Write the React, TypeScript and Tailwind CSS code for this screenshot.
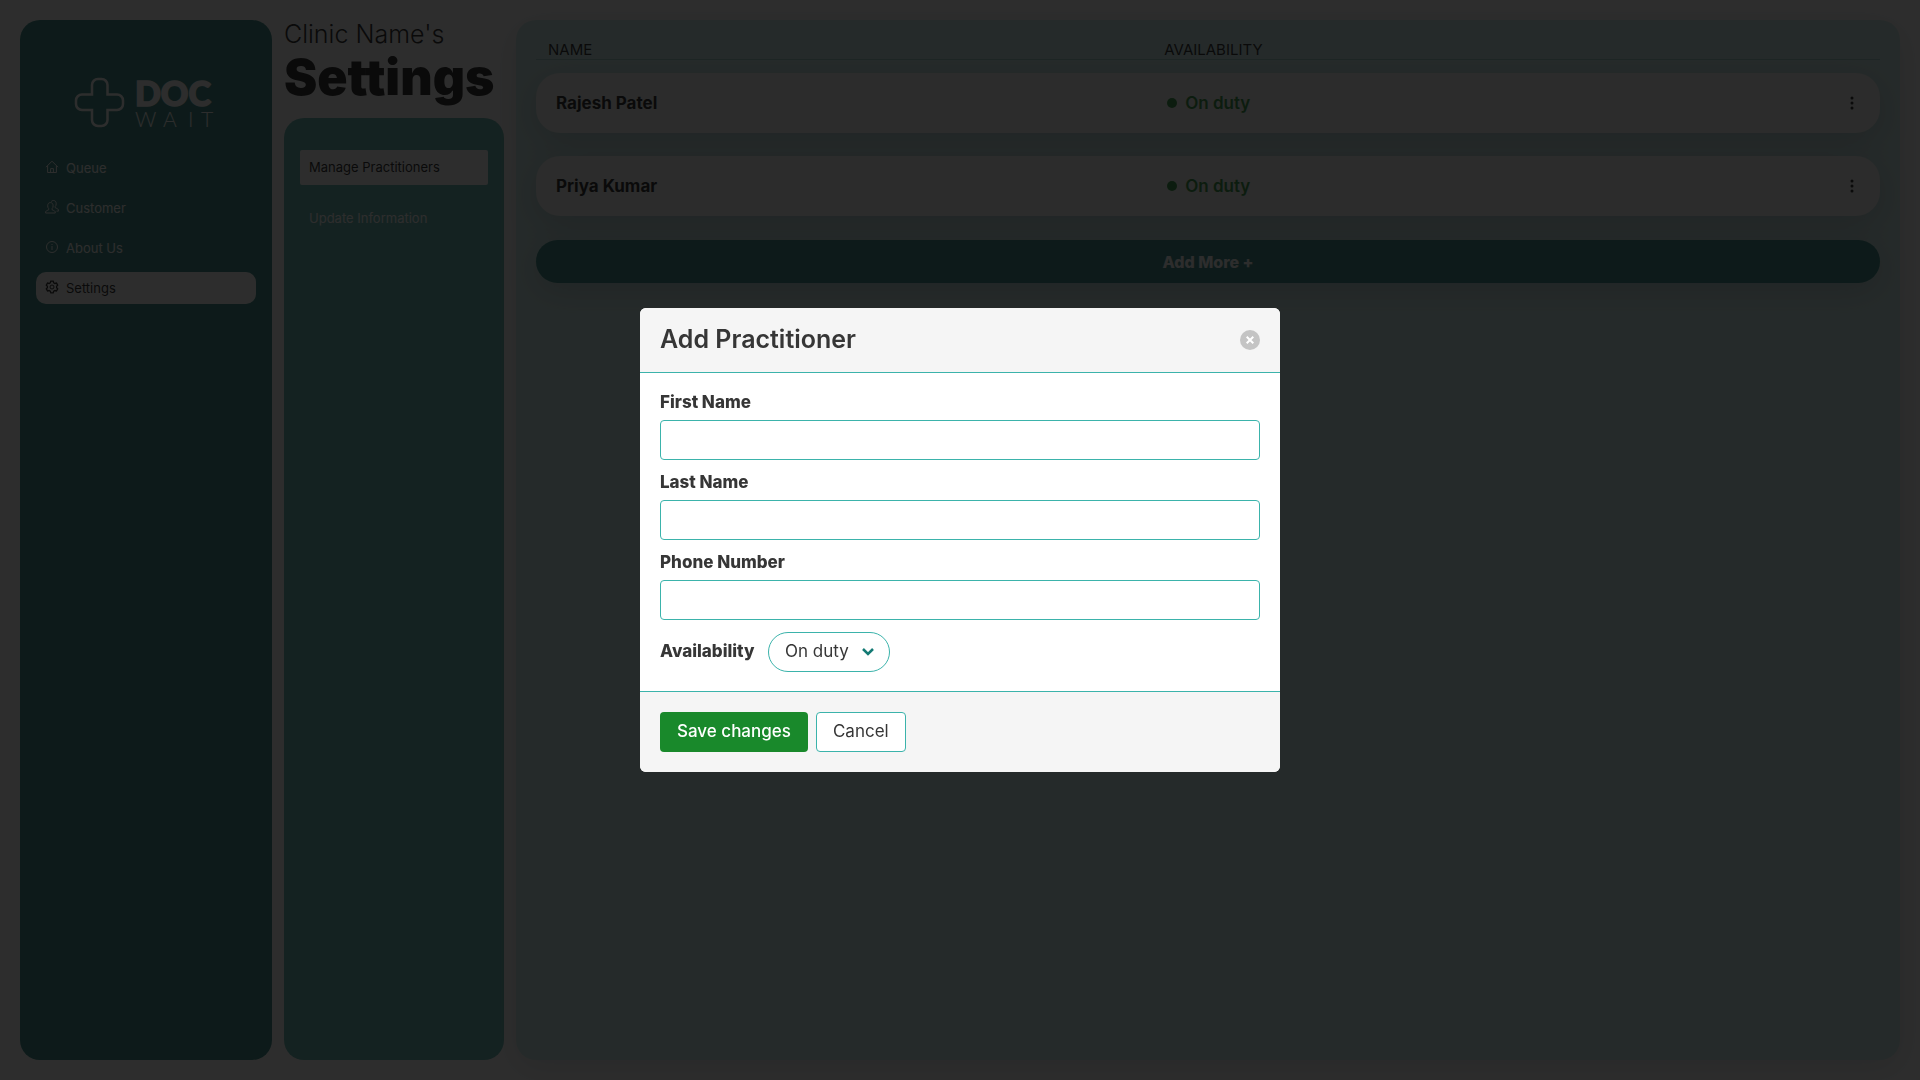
import { useState } from "react";
import type { ReactNode } from "react";

function Icon({ children }: { children: ReactNode }) {
  return (
    <svg viewBox="0 0 14 14" className="mb-1 size-3.5 shrink-0" fill="none" stroke="currentColor" strokeWidth="1" aria-hidden="true">
      {children}
    </svg>
  );
}

const navItems: { label: string; icon: ReactNode }[] = [
  {
    label: "Queue",
    icon: (
      <Icon>
        <path d="M1 7.200 7 1.200l6 6M2.600 6v6.500h8.800V6M5.600 12.500V8.600h2.800v3.900" />
      </Icon>
    ),
  },
  {
    label: "Customer",
    icon: (
      <Icon>
        <path d="M.6 13v-.9c0-.8.6-1.300 3.100-2.300V8.600C3 8 2.700 7.100 2.700 5.800c0-2 1-3.200 2.700-3.200s2.700 1.200 2.700 3.200c0 1.300-.3 2.200-1 2.800v1.200c2.500 1 3.200 1.500 3.200 2.300v.9zM6.200 1.500C6.800.8 7.600.5 8.500.5c1.700 0 2.700 1.200 2.700 3.200 0 1.300-.3 2.200-1 2.800v1.200c2.600 1.100 3.300 1.600 3.300 2.500v.9h-2" />
      </Icon>
    ),
  },
  {
    label: "About Us",
    icon: (
      <Icon>
        <circle cx="7" cy="7" r="5.500" />
        <path d="M7 4v1M7 6v4" />
      </Icon>
    ),
  },
  {
    label: "Settings",
    icon: (
      <Icon>
        <path
          strokeWidth="1.300"
          d="M5.800 1.200h2.400l.5 1.600 1.200.7 1.600-.4 1.200 2.100L11.600 6.300v1.400l1.100 1.100-1.200 2.100-1.600-.4-1.200.7-.5 1.600H5.800l-.5-1.600-1.200-.7-1.600.4L1.300 8.800l1.100-1.100V6.300L1.300 5.200l1.200-2.100 1.600.4 1.200-.7z"
        />
        <circle cx="7" cy="7" r="2" />
      </Icon>
    ),
  },
];

const practitioners = ["Rajesh Patel", "Priya Kumar"];

function Logo() {
  return (
    <svg viewBox="0 0 142 50" className="mx-auto h-[50px] w-[142px] overflow-visible text-white" fill="currentColor" role="img" aria-label="Doc Wait">
      <path
        d="M23 1h3.500a6 6 0 0 1 6 6v9.500H42a6 6 0 0 1 6 6v3.500a6 6 0 0 1-6 6h-9.500v10a6 6 0 0 1-6 6H23a6 6 0 0 1-6-6v-10H7a6 6 0 0 1-6-6v-3.500a6 6 0 0 1 6-6h10V7a6 6 0 0 1 6-6z"
        fill="none"
        stroke="currentColor"
        strokeWidth="2.500"
      />
      <text x="60" y="28" fontSize="34" fontWeight="900" fontFamily="Lato, sans-serif" stroke="currentColor" strokeWidth="1.500">DOC</text>
      <text x="60 88 113 126" y="49" fontSize="21" fontWeight="300" fontFamily="Lato, sans-serif">WAIT</text>
    </svg>
  );
}

function Sidebar() {
  return (
    <aside className="w-[252px] shrink-0 rounded-[20px] bg-[#1c7c76] px-4 pt-[58px]">
      <Logo />
      <nav className="mt-6 flex flex-col gap-2">
        {navItems.map((item) => (
          <a
            key={item.label}
            href="#"
            className={
              item.label === "Settings"
                ? "flex h-8 items-center gap-[7px] rounded-[10px] bg-white pt-0.5 pl-[9px] text-[13px] text-[#0a0a0a]"
                : "flex h-8 items-center gap-[7px] rounded-[10px] pt-0.5 pl-[9px] text-[13px] text-white"
            }
          >
            {item.icon}
            <span>{item.label}</span>
          </a>
        ))}
      </nav>
    </aside>
  );
}

function SettingsColumn() {
  return (
    <div className="flex w-[220px] shrink-0 flex-col text-[#0a0a0a]">
      <h1 className="whitespace-nowrap">
        <span className="block text-[25px] leading-7 font-light">Clinic Name's</span>
        <span className="block text-[50px] leading-[58px] font-black">Settings</span>
      </h1>
      <nav className="mt-3 flex flex-1 flex-col gap-4 rounded-[20px] bg-[#51b1aa] px-4 py-8 text-[13px]">
        <a href="#" className="flex h-[35px] items-center rounded-xs bg-white px-[9px]">Manage Practitioners</a>
        <a href="#" className="flex h-[35px] items-center rounded-xs px-[9px] text-white">Update Information</a>
      </nav>
    </div>
  );
}

function PractitionerList({ onAdd }: { onAdd: () => void }) {
  return (
    <main className="min-w-0 flex-1 rounded-[20px] bg-[#c8eae8] px-5 pt-2 text-[#0a0a0a] shadow-[0_8px_32px_rgba(31,38,60,0.15)]">
      <table className="block w-full">
        <thead className="block">
          <tr className="grid h-8 grid-cols-[46%_1fr] items-end border-b border-[#94c8c4] text-[15px] leading-[18px]">
            <th scope="col" className="pl-3 text-left font-normal">NAME</th>
            <th scope="col" className="pl-[10px] text-left font-normal">AVAILABILITY</th>
          </tr>
        </thead>
        <tbody className="flex flex-col gap-[23px] pt-[13px]">
          {practitioners.map((name) => (
            <tr
              key={name}
              className="grid h-[60px] grid-cols-[46%_1fr_auto] items-center rounded-3xl bg-[#f3f6f3] text-[17px] leading-6 shadow-[0_8px_32px_rgba(31,38,60,0.2)]"
            >
              <td className="pl-5 font-bold">{name}</td>
              <td className="flex items-center gap-2 pl-[13px] font-semibold text-[#19892b]">
                <span className="size-2.5 rounded-full bg-[#19892b]" />
                On duty
              </td>
              <td className="pr-5">
                <button type="button" aria-label={`Options for ${name}`} className="flex size-4 items-center justify-center">
                  <svg viewBox="0 0 4 14" className="h-3.5 w-1" fill="currentColor" aria-hidden="true">
                    <circle cx="2" cy="2" r="1.500" />
                    <circle cx="2" cy="7" r="1.500" />
                    <circle cx="2" cy="12" r="1.500" />
                  </svg>
                </button>
              </td>
            </tr>
          ))}
        </tbody>
      </table>
      <button
        type="button"
        onClick={onAdd}
        className="mt-6 h-[43px] w-full rounded-3xl bg-[#1c7c76] text-base font-extrabold text-white shadow-[0_8px_32px_rgba(31,38,60,0.2)]"
      >
        Add More +
      </button>
    </main>
  );
}

function Field({ id, label, type = "text" }: { id: string; label: string; type?: string }) {
  return (
    <div className="mb-3">
      <label htmlFor={id} className="mb-2 block leading-5 font-extrabold">{label}</label>
      <input id={id} type={type} className="block h-10 w-full rounded border border-[#3bb3ab] bg-white px-3 outline-none" />
    </div>
  );
}

function PractitionerDialog({ onClose }: { onClose: () => void }) {
  return (
    <div className="fixed inset-0 flex items-center justify-center bg-[#0a0a0a]/86">
      <form
        role="dialog"
        aria-modal="true"
        aria-labelledby="dialog-title"
        className="w-[640px] overflow-hidden rounded-md bg-white text-[17px] text-[#363636]"
        onSubmit={(event) => event.preventDefault()}
      >
        <header className="flex h-[65px] items-center justify-between border-b border-[#3bb3ab] bg-[#f5f5f5] px-5">
          <h2 id="dialog-title" className="text-[25px] font-semibold">Add Practitioner</h2>
          <button type="button" aria-label="Close" onClick={onClose} className="flex size-5 items-center justify-center rounded-full bg-[#c4c4c4] text-white">
            <svg viewBox="0 0 8 8" className="size-2" stroke="currentColor" strokeWidth="2" aria-hidden="true">
              <path d="m.7.7 6.600 6.600M7.300.7.7 7.300" />
            </svg>
          </button>
        </header>
        <div className="px-5 py-[19px]">
          <Field id="first-name" label="First Name" />
          <Field id="last-name" label="Last Name" />
          <Field id="phone" label="Phone Number" type="tel" />
          <div className="flex items-center gap-2">
            <label htmlFor="availability" className="min-w-[100px] font-extrabold">Availability</label>
            <div className="relative">
              <select id="availability" className="h-10 w-[122px] appearance-none rounded-full border border-[#3bb3ab] bg-white pl-4 outline-none">
                <option>On duty</option>
                <option>Off duty</option>
              </select>
              <svg viewBox="0 0 12 8" className="pointer-events-none absolute top-4 right-4 h-2 w-3 text-[#147a74]" fill="none" stroke="currentColor" strokeWidth="2.500" aria-hidden="true">
                <path d="m1 1 5 5 5-5" />
              </svg>
            </div>
          </div>
        </div>
        <footer className="flex gap-2 border-t border-[#3bb3ab] bg-[#f5f5f5] p-5">
          <button type="submit" className="h-10 rounded bg-[#19892b] px-[17px] font-medium text-white">Save changes</button>
          <button type="button" onClick={onClose} className="h-10 rounded border border-[#3bb3ab] bg-white px-4">Cancel</button>
        </footer>
      </form>
    </div>
  );
}

export default function App() {
  const [open, setOpen] = useState(true);
  return (
    <div className="flex min-h-screen gap-3 bg-white p-5 font-[Inter,sans-serif]">
      <Sidebar />
      <SettingsColumn />
      <PractitionerList onAdd={() => setOpen(true)} />
      {open && <PractitionerDialog onClose={() => setOpen(false)} />}
    </div>
  );
}
